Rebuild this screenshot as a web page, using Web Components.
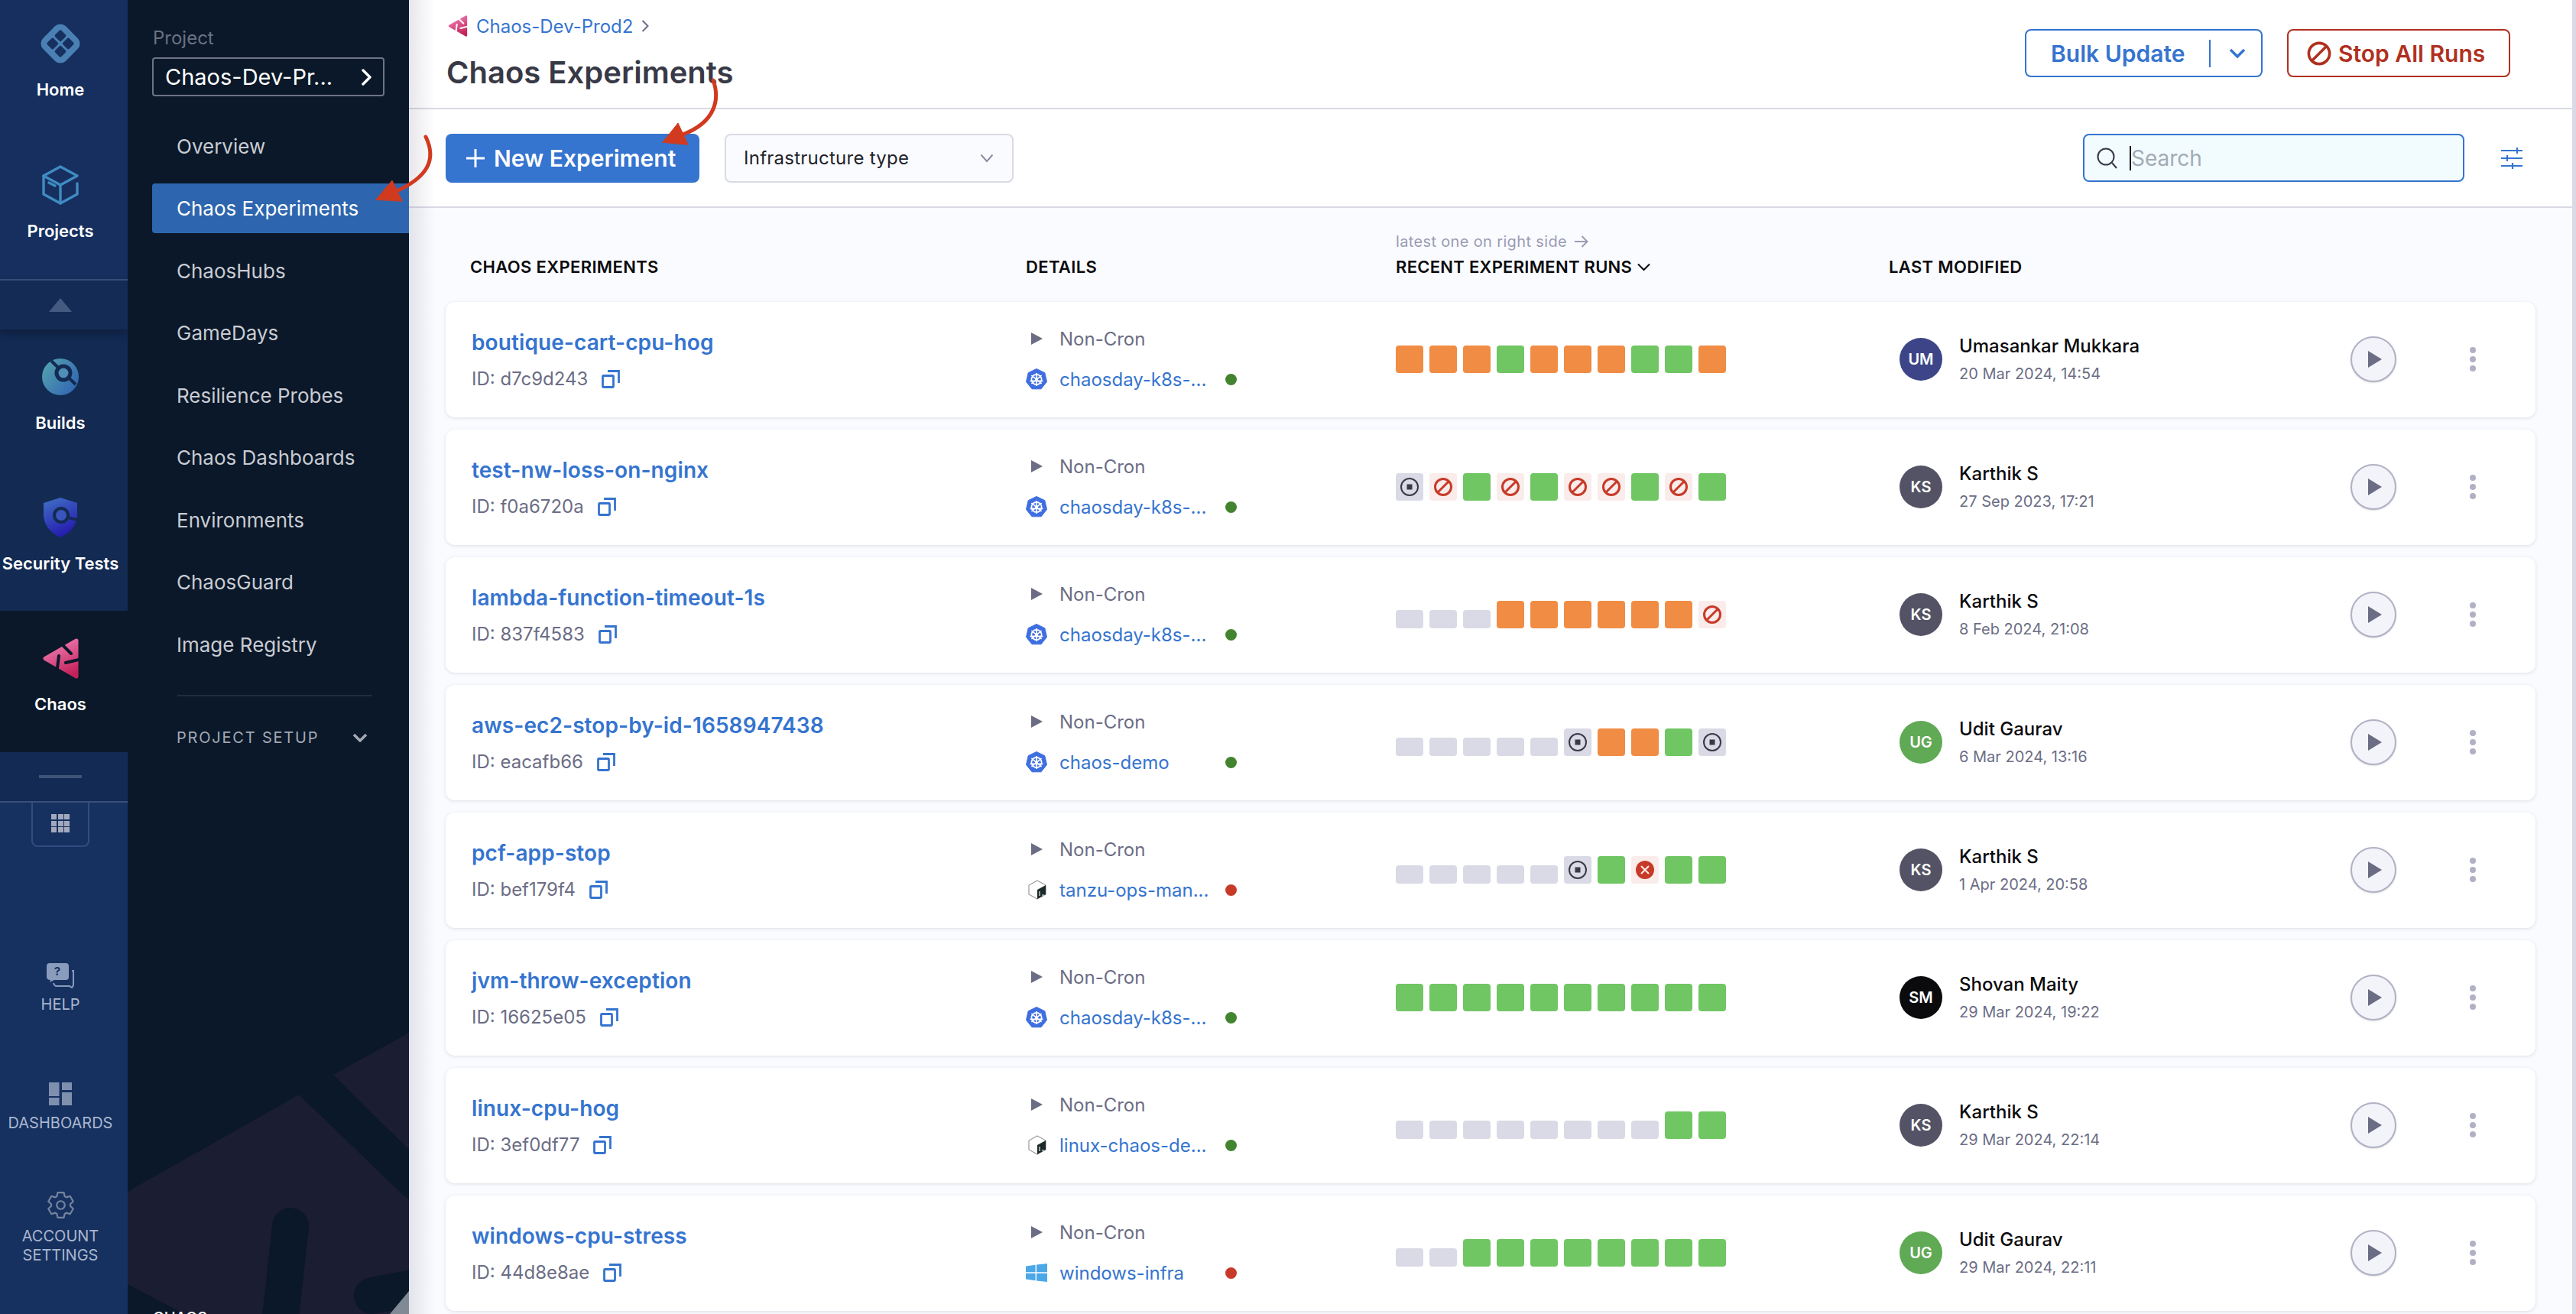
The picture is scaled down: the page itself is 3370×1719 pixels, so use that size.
<!DOCTYPE html>
<html lang="en">
<head>
<meta charset="utf-8">
<title>Chaos Experiments</title>
<style>
  html, body { margin: 0; height: 100%; overflow: hidden; background: #fafbff; }
  body { font-family: Inter, "Liberation Sans", sans-serif; }
</style>
</head>
<body>
<app-shell>
  <nav-rail slot="rail"></nav-rail>
  <project-nav slot="nav">
    <nav-link>Overview</nav-link>
    <nav-link active>Chaos Experiments</nav-link>
    <nav-link>ChaosHubs</nav-link>
    <nav-link>GameDays</nav-link>
    <nav-link>Resilience Probes</nav-link>
    <nav-link>Chaos Dashboards</nav-link>
    <nav-link>Environments</nav-link>
    <nav-link>ChaosGuard</nav-link>
    <nav-link>Image Registry</nav-link>
  </project-nav>
  <page-header slot="main"></page-header>
  <tool-bar slot="main"></tool-bar>
  <experiment-table slot="main">
    <experiment-row name="boutique-cart-cpu-hog" exp-id="d7c9d243" infra="chaosday-k8s-..." kind="k8s" status="ok" runs="ooogooogg o" initials="UM" avatar="#3d4588" user="Umasankar Mukkara" date="20 Mar 2024, 14:54"></experiment-row>
    <experiment-row name="test-nw-loss-on-nginx" exp-id="f0a6720a" infra="chaosday-k8s-..." kind="k8s" status="ok" runs="sbgbgbbgbg" initials="KS" avatar="#535365" user="Karthik S" date="27 Sep 2023, 17:21"></experiment-row>
    <experiment-row name="lambda-function-timeout-1s" exp-id="837f4583" infra="chaosday-k8s-..." kind="k8s" status="ok" runs="___oooooob" initials="KS" avatar="#535365" user="Karthik S" date="8 Feb 2024, 21:08"></experiment-row>
    <experiment-row name="aws-ec2-stop-by-id-1658947438" exp-id="eacafb66" infra="chaos-demo" kind="k8s" status="ok" runs="_____soogs" initials="UG" avatar="#60a955" user="Udit Gaurav" date="6 Mar 2024, 13:16"></experiment-row>
    <experiment-row name="pcf-app-stop" exp-id="bef179f4" infra="tanzu-ops-man..." kind="cube" status="bad" runs="_____sgxgg" initials="KS" avatar="#535365" user="Karthik S" date="1 Apr 2024, 20:58"></experiment-row>
    <experiment-row name="jvm-throw-exception" exp-id="16625e05" infra="chaosday-k8s-..." kind="k8s" status="ok" runs="gggggggggg" initials="SM" avatar="#0b0b0d" user="Shovan Maity" date="29 Mar 2024, 19:22"></experiment-row>
    <experiment-row name="linux-cpu-hog" exp-id="3ef0df77" infra="linux-chaos-de..." kind="cube" status="ok" runs="________gg" initials="KS" avatar="#535365" user="Karthik S" date="29 Mar 2024, 22:14"></experiment-row>
    <experiment-row name="windows-cpu-stress" exp-id="44d8e8ae" infra="windows-infra" kind="win" status="bad" runs="__gggggggg" initials="UG" avatar="#60a955" user="Udit Gaurav" date="29 Mar 2024, 22:11"></experiment-row>
  </experiment-table>
  <annotation-arrows slot="over"></annotation-arrows>
</app-shell>

<script>
// icons shared by the components
function chaosIcon(id, w, h) {
  return `<svg width="${w}" height="${h}" viewBox="0 0 47 53">
    <defs><linearGradient id="${id}" x1="0.3" y1="0" x2="0.7" y2="1"><stop offset="0" stop-color="#ee7db2"/><stop offset="1" stop-color="#c4215a"/></linearGradient></defs>
    <path d="M44 3 L3 26.5 L44 50 Z" fill="url(#${id})" stroke="url(#${id})" stroke-width="5" stroke-linejoin="round"/>
    <path d="M26 9 L37 20 M30 32 L47 28 M21 23 L19 39" stroke="${id === 'cb' ? '#fff' : '#0a1829'}" stroke-width="4" stroke-linecap="round" fill="none"/>
  </svg>`;
}

// six tooth cog for the account settings entry
function cogPath() {
  let d = '';
  for (let i = 0; i < 6; i++) {
    const a = (i * 60 - 90) * Math.PI / 180;
    const pts = [[8.6, -0.42], [11.6, -0.24], [11.6, 0.24], [8.6, 0.42]];
    pts.forEach(([r, o], n) => {
      const x = 12 + r * Math.cos(a + o);
      const y = 12 + r * Math.sin(a + o);
      d += `${i === 0 && n === 0 ? 'M' : 'L'}${x.toFixed(2)} ${y.toFixed(2)} `;
    });
  }
  return d + 'Z';
}

const ICONS = {
  home: `<svg width="60" height="60" viewBox="0 0 60 60">
    <rect x="9" y="9" width="42" height="42" rx="10" transform="rotate(45 30 30)" fill="#4a80b4"/>
    <g fill="#16305f" transform="rotate(45 30 30)">
      <rect x="17" y="17" width="11.5" height="11.5" rx="2"/><rect x="31.5" y="17" width="11.5" height="11.5" rx="2"/>
      <rect x="17" y="31.5" width="11.5" height="11.5" rx="2"/><rect x="31.5" y="31.5" width="11.5" height="11.5" rx="2"/>
    </g></svg>`,
  projects: `<svg width="48" height="52" viewBox="0 0 48 52" fill="none" stroke="#3f8cc3" stroke-width="3.4" stroke-linejoin="round" stroke-linecap="round">
    <path d="M24 2 L46 14 L24 26 L2 14 Z"/><path d="M2 14 V38 L24 50 L46 38 V24"/><path d="M24 26 V50"/><path d="M9 23 L17 27"/></svg>`,
  builds: `<svg width="48" height="48" viewBox="0 0 48 48">
    <defs><linearGradient id="bg" x1="0" y1="0.2" x2="1" y2="0.9"><stop offset="0" stop-color="#53a0ad"/><stop offset="1" stop-color="#2f62b4"/></linearGradient></defs>
    <circle cx="24" cy="24" r="24" fill="url(#bg)"/>
    <path d="M12 3 L44 34" stroke="#132a52" stroke-width="4"/>
    <circle cx="28" cy="19" r="9" fill="#4f8fb8" stroke="#132a52" stroke-width="5"/></svg>`,
  security: `<svg width="44" height="52" viewBox="0 0 44 52">
    <defs><linearGradient id="sg" x1="0.2" y1="0" x2="0.6" y2="1"><stop offset="0" stop-color="#3f6cc4"/><stop offset="1" stop-color="#2318ad"/></linearGradient></defs>
    <path d="M22 0 L44 7 V22 C44 36 34 47 22 52 C10 47 0 36 0 22 V7 Z" fill="url(#sg)"/>
    <circle cx="23" cy="23" r="9" fill="#3a55bd" stroke="#132a52" stroke-width="4"/>
    <path d="M31 26 L44 29" stroke="#132a52" stroke-width="3.5"/></svg>`,
  help: `<svg width="36" height="33" viewBox="0 0 36 33">
    <path d="M4 0 H25 Q29 0 29 4 V18 Q29 22 25 22 H10 L4 25 L5 22 Q0 22 0 18 V4 Q0 0 4 0 Z" fill="#8a9cbc"/>
    <path d="M33 10 H35 V29 L33 32 L30 30 H13 Q10 30 9 26" fill="none" stroke="#8a9cbc" stroke-width="2"/>
    <text x="14" y="16" text-anchor="middle" font-family="Inter, sans-serif" font-size="15" font-weight="700" fill="#16305f">?</text></svg>`,
  dash: `<svg width="30" height="30" viewBox="0 0 30 30" fill="#7f90af">
    <rect width="13.5" height="18"/><rect x="17" width="13" height="10"/><rect y="20" width="13.5" height="10"/><rect x="17" y="13" width="13" height="17"/></svg>`,
  cog: `<svg width="35" height="35" viewBox="0 0 24 24" fill="none" stroke="#75849f" stroke-width="1.5" stroke-linejoin="round">
    <path d="${cogPath()}"/><circle cx="12" cy="12" r="3.6"/></svg>`,
  grid: `<svg width="24" height="24" viewBox="0 0 24 24" fill="#a3a8bd">
    ${[0, 9, 17].map(y => [0, 9, 17].map(x => `<rect x="${x}" y="${y}" width="7" height="7"/>`).join('')).join('')}</svg>`,
  k8s: `<svg width="28" height="28" viewBox="0 0 28 28">
    <path d="M14 0.5 L24.8 5.7 L27.5 17.4 L20 26.8 H8 L0.5 17.4 L3.2 5.7 Z" fill="#3f6ee0" stroke="#3f6ee0" stroke-linejoin="round"/>
    <g stroke="#fff" stroke-width="1.7" fill="none"><circle cx="14" cy="14.5" r="6.6"/>
    <path d="M14 6 V23 M7.4 9.2 L20.6 19.8 M20.6 9.2 L7.4 19.8 M5.6 16.4 H22.4"/></g><circle cx="14" cy="14.5" r="2" fill="#fff"/></svg>`,
  cube: `<svg width="24" height="26" viewBox="0 0 24 26">
    <path d="M12 1 L23 7 V19 L12 25 L1 19 V7 Z" fill="#fff" stroke="#9a9a9a" stroke-width="1.2"/>
    <path d="M23 7 V19 L12 25 V13 Z" fill="#1d2a2a"/><path d="M15 15 V21 M18 20 H21" stroke="#fff" stroke-width="1.1"/></svg>`,
  win: `<svg width="28" height="24" viewBox="0 0 28 24" fill="#4ba8e8">
    <path d="M0 3.4 L12.6 1.8 V11.3 H0 Z M14 1.6 L28 0 V11.3 H14 Z M0 12.7 H12.6 V22.2 L0 20.6 Z M14 12.7 H28 V24 L14 22.4 Z"/></svg>`,
  copy: `<svg width="24" height="24" viewBox="0 0 24 24" fill="none" stroke="#3574cf" stroke-width="2.8">
    <rect x="1.5" y="7.5" width="14" height="15" rx="1"/><path d="M8 1.5 H22.5 V17"/></svg>`,
  ban: `<svg width="32" height="32" viewBox="0 0 32 32" fill="none" stroke="#b03020" stroke-width="3.6">
    <circle cx="16" cy="16" r="13.6"/><path d="M7 25 L25 7"/></svg>`
};

class AppShell extends HTMLElement {
  connectedCallback() {
    this.attachShadow({ mode: 'open' }).innerHTML = `
      <style>
        :host { display: flex; position: relative; width: 3370px; height: 1719px; overflow: hidden; color: #22222a; }
        .main { flex: 1; min-width: 0; display: flex; flex-direction: column; background: #fafbff; position: relative; }
        .main::after { content: ''; position: absolute; left: 0; top: 0; bottom: 0; width: 34px; background: linear-gradient(90deg, rgba(70,72,100,.13), rgba(70,72,100,0)); pointer-events: none; }
        .strip { width: 5px; background: #d9dae5; }
        .wrap { flex: 1; min-width: 0; display: flex; }
      </style>
      <slot name="rail"></slot>
      <slot name="nav"></slot>
      <div class="wrap">
        <div class="main"><slot name="main"></slot></div>
        <div class="strip"></div>
      </div>
      <slot name="over"></slot>`;
  }
}

class RailItem extends HTMLElement {
  connectedCallback() {
    this.attachShadow({ mode: 'open' }).innerHTML = `
      <style>
        :host { display: flex; flex-direction: column; align-items: center; height: 185px; box-sizing: border-box; padding: 32px 9px 0 0; }
        :host([active]) { background: #0a1829; }
        .icon { height: 60px; display: flex; align-items: center; justify-content: center; }
        .label { margin-top: 16px; font-size: 22px; line-height: 28px; font-weight: 600; color: #fff; white-space: nowrap; }
      </style>
      <div class="icon"><slot></slot></div>
      <div class="label">${this.getAttribute('label')}</div>`;
  }
}

class FootItem extends HTMLElement {
  connectedCallback() {
    this.attachShadow({ mode: 'open' }).innerHTML = `
      <style>
        :host { display: flex; flex-direction: column; align-items: center; padding-right: 9px; }
        .icon { display: flex; }
        .label { margin-top: var(--gap, 11px); font-size: 20px; line-height: 25px; color: #a9b6cf; text-align: center; white-space: pre-line; }
      </style>
      <div class="icon"><slot></slot></div>
      <div class="label">${this.getAttribute('label')}</div>`;
  }
}

class NavRail extends HTMLElement {
  connectedCallback() {
    this.attachShadow({ mode: 'open' }).innerHTML = `
      <style>
        :host { display: flex; flex-direction: column; flex: none; width: 167px; height: 1719px; background: #16315f; overflow: hidden; font-family: Inter, sans-serif; position: relative; z-index: 2; }
        .top { background: #162f5e; margin-top: -5px; border-bottom: 2px solid #3a4f78; }
        .fold { height: 64px; display: flex; align-items: center; justify-content: center; padding-right: 9px; background: #142b55; box-shadow: 0 6px 10px rgba(6,14,30,.35); position: relative; }
        .tri { width: 0; height: 0; border-left: 15px solid transparent; border-right: 15px solid transparent; border-bottom: 18px solid #445a80; }
        .scroll { background: #132a52; }
        .more { height: 64px; display: flex; align-items: center; justify-content: center; padding-right: 9px; background: #132b54; border-bottom: 2px solid #37507a; }
        .dash { width: 56px; height: 4px; background: #3f5478; }
        .grid { align-self: flex-start; margin-left: 41px; width: 76px; height: 58px; box-sizing: border-box; border: 2px solid #2f4d80; border-top: 0; border-radius: 0 0 8px 8px; display: flex; align-items: center; justify-content: center; padding-bottom: 2px; }
        .help { margin-top: 152px; --gap: 9px; }
        .dashboards { margin-top: 89px; }
        .account { margin-top: 77px; }
      </style>
      <div class="top">
        <rail-item label="Home">${ICONS.home}</rail-item>
        <rail-item label="Projects">${ICONS.projects}</rail-item>
      </div>
      <div class="fold"><div class="tri"></div></div>
      <div class="scroll">
        <rail-item label="Builds" style="height:184px">${ICONS.builds}</rail-item>
        <rail-item label="Security Tests" style="height:184px">${ICONS.security}</rail-item>
      </div>
      <rail-item label="Chaos" active>${chaosIcon('cr', 47, 53)}</rail-item>
      <div class="more"><div class="dash"></div></div>
      <div class="grid">${ICONS.grid}</div>
      <foot-item class="help" label="HELP">${ICONS.help}</foot-item>
      <foot-item class="dashboards" label="DASHBOARDS">${ICONS.dash}</foot-item>
      <foot-item class="account" label="ACCOUNT&#10;SETTINGS">${ICONS.cog}</foot-item>`;
  }
}

class NavLink extends HTMLElement {
  connectedCallback() {
    this.attachShadow({ mode: 'open' }).innerHTML = `
      <style>
        :host { display: flex; align-items: center; height: 65px; margin-left: 32px; padding-left: 32px; font-size: 26px; color: #c9cbd2; white-space: nowrap; border-radius: 4px 0 0 4px; }
        :host([active]) { background: #2d66ae; color: #fff; }
      </style>
      <slot></slot>`;
  }
}

class ProjectNav extends HTMLElement {
  connectedCallback() {
    this.attachShadow({ mode: 'open' }).innerHTML = `
      <style>
        :host { display: flex; flex-direction: column; flex: none; width: 368px; height: 1719px; background: #0a1829; position: relative; overflow: hidden; z-index: 1; font-family: Inter, sans-serif; }
        .art { position: absolute; left: 0; top: 0; }
        .label { margin: 36px 0 0 33px; font-size: 24px; line-height: 28px; color: #6b7282; position: relative; }
        .picker { margin: 11px 32px 0 32px; height: 51px; box-sizing: border-box; border: 2px solid #6d7484; border-radius: 4px; display: flex; align-items: center; justify-content: space-between; padding: 0 14px 0 15px; font-size: 29px; color: #fff; position: relative; white-space: nowrap; }
        .links { display: flex; flex-direction: column; gap: 16.5px; margin-top: 32.5px; position: relative; }
        .sep { height: 2px; margin: 33.5px 48px 0 65px; background: #1f2c40; position: relative; }
        .setup { display: flex; align-items: center; justify-content: space-between; margin: 41px 54px 0 64px; font-size: 20px; line-height: 26px; letter-spacing: 1.8px; color: #a3a8b4; position: relative; }
        .foot { margin: auto 0 -17px 33px; font-size: 20px; line-height: 24px; font-weight: 500; color: #fff; position: relative; }
      </style>
      <svg class="art" width="368" height="1719">
        <g fill="#1b1d33">
          <path d="M0 1559 L224 1432 L360 1563 L368 1568 V1719 H74 L0 1680 Z"/>
          <path d="M269 1406 L368 1351 V1504 Z"/>
        </g>
        <g stroke="#0a1829" fill="none" stroke-linecap="round">
          <path d="M213 1604 L196 1760" stroke-width="48"/>
          <path d="M320 1695 L400 1680" stroke-width="48"/>
        </g>
        <path d="M368 1689 L343 1719 H368 Z" fill="#7f8a95"/>
      </svg>
      <div class="label">Project</div>
      <div class="picker"><span>Chaos-Dev-Pr...</span>
        <svg width="14" height="22" viewBox="0 0 14 22" fill="none" stroke="#fff" stroke-width="3.4" stroke-linecap="round" stroke-linejoin="round"><path d="M2 2 L11 11 L2 20"/></svg>
      </div>
      <div class="links"><slot></slot></div>
      <div class="sep"></div>
      <div class="setup"><span>PROJECT SETUP</span>
        <svg width="20" height="13" viewBox="0 0 20 13" fill="none" stroke="#a3a8b4" stroke-width="3.6" stroke-linejoin="round"><path d="M2 2 L10 10 L18 2"/></svg>
      </div>
      <div class="foot">CHAOS</div>`;
  }
}

class PageHeader extends HTMLElement {
  connectedCallback() {
    this.attachShadow({ mode: 'open' }).innerHTML = `
      <style>
        :host { display: flex; justify-content: space-between; height: 143px; box-sizing: border-box; background: #fff; border-bottom: 2px solid #d9dae5; padding: 0 81px 0 48px; font-family: Inter, sans-serif; }
        .crumb { display: flex; align-items: center; gap: 11px; height: 32px; margin: 18px 0 0 3px; font-size: 24px; color: #3574cf; }
        h1 { margin: 21px 0 0 1px; font-size: 40px; line-height: 48px; font-weight: 600; color: #383946; }
        .actions { display: flex; gap: 32px; padding-top: 38px; }
        .btn { height: 63px; box-sizing: border-box; border-radius: 8px; border: 2px solid; display: flex; align-items: center; font-size: 30px; font-weight: 600; white-space: nowrap; }
        .bulk { width: 311px; color: #3574cf; border-color: #3574cf; padding-left: 32px; }
        .bulk i { width: 2px; height: 36px; background: #3574cf; margin-left: 32px; }
        .bulk svg { margin-left: 24px; }
        .stop { width: 292px; color: #b03020; border-color: #b03020; padding-left: 24px; gap: 9px; }
      </style>
      <div>
        <div class="crumb">${chaosIcon('cb', 26, 28)}<span>Chaos-Dev-Prod2</span>
          <svg width="10" height="18" viewBox="0 0 10 18" fill="none" stroke="#6b6d85" stroke-width="2"><path d="M1.5 2 L8.5 9 L1.5 16"/></svg>
        </div>
        <h1>Chaos Experiments</h1>
      </div>
      <div class="actions">
        <div class="btn bulk"><span>Bulk Update</span><i></i>
          <svg width="22" height="14" viewBox="0 0 22 14" fill="none" stroke="#3574cf" stroke-width="3.4"><path d="M2 2 L11 11 L20 2"/></svg>
        </div>
        <div class="btn stop">${ICONS.ban}<span>Stop All Runs</span></div>
      </div>`;
  }
}

class ToolBar extends HTMLElement {
  connectedCallback() {
    this.attachShadow({ mode: 'open' }).innerHTML = `
      <style>
        :host { display: flex; align-items: center; height: 129px; box-sizing: border-box; background: #fff; border-bottom: 2px solid #d9dae5; padding: 0 65px 0 48px; font-family: Inter, sans-serif; }
        .new { width: 332px; height: 64px; box-sizing: border-box; background: #3574cf; color: #fff; border-radius: 8px; display: flex; align-items: center; padding-left: 27px; gap: 12px; font-size: 30px; font-weight: 600; white-space: nowrap; }
        .infra { width: 378px; height: 64px; box-sizing: border-box; margin-left: 33px; border: 2px solid #d9dae5; border-radius: 8px; background: #fafbff; display: flex; align-items: center; justify-content: space-between; padding: 0 24px 0 23px; font-size: 24px; letter-spacing: .25px; color: #22222a; white-space: nowrap; }
        .search { width: 499px; height: 63px; box-sizing: border-box; margin-left: auto; background: #f2fbfe; border: 2px solid #3574cf; border-radius: 8px; display: flex; align-items: center; padding-left: 16px; font-size: 28px; color: #a3abb6; }
        .caret { width: 2px; height: 32px; background: #111; margin-left: 16px; }
        .tune { margin-left: 48px; flex: none; }
      </style>
      <div class="new">
        <svg width="24" height="24" viewBox="0 0 24 24" stroke="#fff" stroke-width="3"><path d="M12 0 V24 M0 12 H24"/></svg>
        <span>New Experiment</span>
      </div>
      <div class="infra"><span>Infrastructure type</span>
        <svg width="18" height="12" viewBox="0 0 18 12" fill="none" stroke="#8b8ca3" stroke-width="2"><path d="M1.5 1.5 L9 10 L16.5 1.5"/></svg>
      </div>
      <div class="search">
        <svg width="27" height="28" viewBox="0 0 27 28" fill="none" stroke="#383946" stroke-width="2"><circle cx="12" cy="12" r="10.5"/><path d="M20 20 L26 27"/></svg>
        <div class="caret"></div><span>Search</span>
      </div>
      <svg class="tune" width="28" height="28" viewBox="0 0 28 28" stroke="#3574cf" stroke-width="2.2" fill="none">
        <path d="M0 4 H28 M0 14 H28 M0 24 H28 M21 0 V8 M8 10 V18 M15 20 V28"/>
      </svg>`;
  }
}

class ExperimentTable extends HTMLElement {
  connectedCallback() {
    this.attachShadow({ mode: 'open' }).innerHTML = `
      <style>
        :host { display: block; flex: 1; padding: 0 48px; font-family: Inter, sans-serif; min-height: 0; }
        .head { display: grid; grid-template-columns: 727px 484px 645px 1fr; height: 123px; box-sizing: border-box; padding: 32px 0 0 32px; font-size: 22px; letter-spacing: .35px; font-weight: 600; color: #0b0b0d; white-space: nowrap; }
        .head > div { display: flex; flex-direction: column; justify-content: flex-end; padding-bottom: 33px; line-height: 26px; }
        .hint { font-size: 20px; font-weight: 400; color: #9a9bb4; line-height: 24px; margin-bottom: 8px; display: flex; align-items: center; gap: 10px; }
        .sort { display: flex; align-items: center; gap: 7px; letter-spacing: .28px; }
        .rows { display: flex; flex-direction: column; gap: 16px; }
      </style>
      <div class="head">
        <div>CHAOS EXPERIMENTS</div>
        <div>DETAILS</div>
        <div>
          <span class="hint">latest one on right side
            <svg width="18" height="16" viewBox="0 0 18 16" fill="none" stroke="#9a9bb4" stroke-width="2"><path d="M0 8 H16 M9.5 1 L16.5 8 L9.5 15"/></svg>
          </span>
          <span class="sort">RECENT EXPERIMENT RUNS
            <svg width="17" height="11" viewBox="0 0 17 11" fill="none" stroke="#0b0b0d" stroke-width="2"><path d="M1 1.5 L8.5 9 L16 1.5"/></svg>
          </span>
        </div>
        <div>LAST MODIFIED</div>
      </div>
      <div class="rows"><slot></slot></div>`;
  }
}

class RunStrip extends HTMLElement {
  cell(kind) {
    if (kind === 'o') return '<b class="orange"></b>';
    if (kind === 'g') return '<b class="green"></b>';
    if (kind === '_') return '<b class="none"></b>';
    if (kind === 's') return `<b class="stop"><svg width="24" height="24" viewBox="0 0 24 24"><circle cx="12" cy="12" r="11" fill="none" stroke="#383946" stroke-width="2"/><rect x="8.5" y="8.5" width="7" height="7" fill="#383946"/></svg></b>`;
    if (kind === 'b') return `<b class="pink"><svg width="24" height="24" viewBox="0 0 24 24" fill="none" stroke="#c83a28" stroke-width="3"><circle cx="12" cy="12" r="10.5"/><path d="M5 19 L19 5"/></svg></b>`;
    return `<b class="pink"><svg width="24" height="24" viewBox="0 0 24 24"><circle cx="12" cy="12" r="12" fill="#c83a28"/><path d="M7 7 L17 17 M17 7 L7 17" stroke="#fbeeeb" stroke-width="2"/></svg></b>`;
  }

  connectedCallback() {
    const runs = (this.getAttribute('runs') || '').replace(/\s/g, '');
    this.attachShadow({ mode: 'open' }).innerHTML = `
      <style>
        :host { display: flex; align-items: flex-end; gap: 8px; height: 36px; }
        b { display: flex; align-items: center; justify-content: center; width: 36px; height: 36px; border-radius: 4px; flex: none; }
        .orange { background: #f08c44; }
        .green { background: #70c663; }
        .none { background: #d9dae5; height: 24px; }
        .stop { background: #d9dae5; }
        .pink { background: #f9ecea; }
      </style>
      ${[...runs].map(k => this.cell(k)).join('')}`;
  }
}

class ExperimentRow extends HTMLElement {
  connectedCallback() {
    const a = n => this.getAttribute(n);
    const dot = a('status') === 'ok' ? '#42842f' : '#c83a28';
    const kind = a('kind');
    this.attachShadow({ mode: 'open' }).innerHTML = `
      <style>
        :host { display: grid; grid-template-columns: 725px 484px 659px 1fr; height: 151px; box-sizing: border-box; padding-left: 34px; background: #fff; border-radius: 12px; box-shadow: 0 1px 4px rgba(96,97,112,.18); flex: none; font-family: Inter, sans-serif; white-space: nowrap; }
        .name { margin-top: 35px; font-size: 28px; letter-spacing: .1px; line-height: 36px; font-weight: 600; color: #3574cf; }
        .id { margin-top: 14px; display: flex; align-items: center; gap: 18px; font-size: 24px; line-height: 32px; color: #6b6d85; }
        .line { display: flex; align-items: center; height: 30px; font-size: 24px; }
        .icon-box { box-sizing: border-box; width: 44px; display: flex; flex: none; }
        .icon-box.tri-box { padding-left: 7px; }
        .icon-box.cube { padding-left: 3px; }
        .type { margin-top: 33px; color: #6b6d85; }
        .infra { margin-top: 23px; color: #3574cf; }
        .infra .txt { width: 217px; }
        .dot { width: 15px; height: 15px; border-radius: 50%; background: ${dot}; }
        .tri { width: 0; height: 0; border-left: 15px solid #6b6d85; border-top: 8.5px solid transparent; border-bottom: 8.5px solid transparent; }
        run-strip { margin-top: 57px; }
        .who { display: flex; align-items: center; height: 150px; }
        .avatar { width: 56px; height: 56px; border-radius: 50%; background: ${a('avatar')}; color: #fff; display: flex; align-items: center; justify-content: center; font-size: 20px; font-weight: 600; flex: none; }
        .meta { width: 512px; margin-left: 22px; }
        .user { font-size: 24px; line-height: 30px; font-weight: 500; color: #0b0b0d; }
        .date { margin-top: 8px; font-size: 20px; line-height: 26px; color: #6b6d85; }
        .play { width: 60px; height: 60px; box-sizing: border-box; border-radius: 50%; background: #f3f3fa; border: 2px solid #b0b1c4; display: flex; align-items: center; justify-content: center; padding-left: 4px; flex: none; box-shadow: 0 1px 2px rgba(96,97,112,.2); }
        .play i { width: 0; height: 0; border-left: 18px solid #6b6d85; border-top: 11px solid transparent; border-bottom: 11px solid transparent; }
        .kebab { margin-left: 96px; display: flex; flex-direction: column; gap: 4px; }
        .kebab i { width: 8px; height: 8px; border-radius: 50%; background: #b0b1c4; }
      </style>
      <div>
        <div class="name">${a('name')}</div>
        <div class="id"><span>ID: ${a('exp-id')}</span>${ICONS.copy}</div>
      </div>
      <div>
        <div class="line type"><span class="icon-box tri-box"><i class="tri"></i></span><span>Non-Cron</span></div>
        <div class="line infra"><span class="icon-box ${kind}">${ICONS[kind]}</span><span class="txt">${a('infra')}</span><i class="dot"></i></div>
      </div>
      <run-strip runs="${a('runs')}"></run-strip>
      <div class="who">
        <div class="avatar">${a('initials')}</div>
        <div class="meta"><div class="user">${a('user')}</div><div class="date">${a('date')}</div></div>
        <div class="play"><i></i></div>
        <div class="kebab"><i></i><i></i><i></i></div>
      </div>`;
  }
}

// the red arrows painted over the screenshot
class AnnotationArrows extends HTMLElement {
  connectedCallback() {
    this.attachShadow({ mode: 'open' }).innerHTML = `
      <style>
        :host { position: absolute; left: 0; top: 0; width: 3370px; height: 1719px; pointer-events: none; z-index: 5; }
      </style>
      <svg width="3370" height="1719" fill="none" stroke="#d13a1f" stroke-width="5" stroke-linecap="round">
        <path d="M933 105 C942 130 936 160 893 176"/>
        <path d="M867 186 L887 161 L900 189 Z" fill="#d13a1f" stroke-width="1"/>
        <path d="M557 179 C572 210 558 232 519 250"/>
        <path d="M492 261 L513 236 L526 263 Z" fill="#d13a1f" stroke-width="1"/>
      </svg>`;
  }
}

customElements.define('app-shell', AppShell);
customElements.define('rail-item', RailItem);
customElements.define('foot-item', FootItem);
customElements.define('nav-rail', NavRail);
customElements.define('nav-link', NavLink);
customElements.define('project-nav', ProjectNav);
customElements.define('page-header', PageHeader);
customElements.define('tool-bar', ToolBar);
customElements.define('experiment-table', ExperimentTable);
customElements.define('run-strip', RunStrip);
customElements.define('experiment-row', ExperimentRow);
customElements.define('annotation-arrows', AnnotationArrows);
</script>
</body>
</html>
